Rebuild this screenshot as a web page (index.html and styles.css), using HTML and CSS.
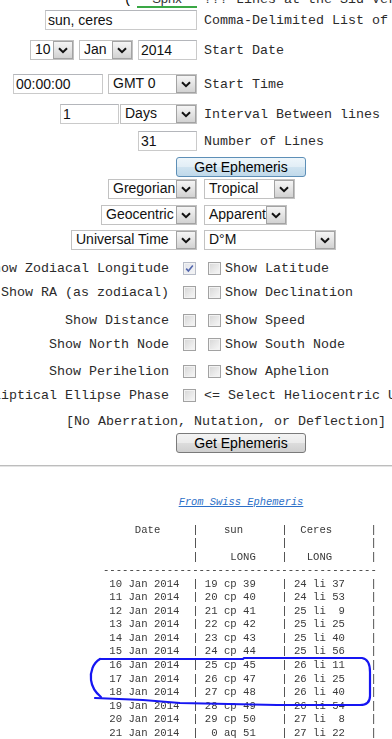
FILE: index.html
```html
<!DOCTYPE html>
<html lang="en">
<head>
    <meta charset="UTF-8">
    <meta name="viewport" content="width=device-width, initial-scale=1.0">
    <title>Ephemeris</title>
    <link rel="stylesheet" href="styles.css">
</head>
<body>
    <div class="page">
        <form class="ephem-form">
            <div class="row row-cut">
                <div class="cell-l"><span class="paren">(</span><span class="sid-link">Sphx</span></div>
                <div class="cell-r label">??? Lines at the Sid Vers</div>
            </div>

            <div class="row mt-1">
                <div class="cell-l"><span class="input in-bodies">sun, ceres</span></div>
                <div class="cell-r label">Comma-Delimited List of</div>
            </div>

            <div class="row mt-10">
                <div class="cell-l">
                    <span class="select sel-day"><span class="val">10</span><span class="arrow"><svg width="10" height="7" viewBox="0 0 10 7"><path d="M1 1.2 L5 5.2 L9 1.2" fill="none" stroke="#111" stroke-width="2"/></svg></span></span>
                    <span class="select sel-month"><span class="val">Jan</span><span class="arrow"><svg width="10" height="7" viewBox="0 0 10 7"><path d="M1 1.2 L5 5.2 L9 1.2" fill="none" stroke="#111" stroke-width="2"/></svg></span></span>
                    <span class="input in-year">2014</span>
                </div>
                <div class="cell-r label">Start Date</div>
            </div>

            <div class="row mt-14">
                <div class="cell-l">
                    <span class="input in-time">00:00:00</span>
                    <span class="select sel-zone"><span class="val">GMT 0</span><span class="arrow"><svg width="10" height="7" viewBox="0 0 10 7"><path d="M1 1.2 L5 5.2 L9 1.2" fill="none" stroke="#111" stroke-width="2"/></svg></span></span>
                </div>
                <div class="cell-r label">Start Time</div>
            </div>

            <div class="row mt-10">
                <div class="cell-l tight">
                    <span class="input in-interval">1</span>
                    <span class="select sel-unit"><span class="val">Days</span><span class="arrow"><svg width="10" height="7" viewBox="0 0 10 7"><path d="M1 1.2 L5 5.2 L9 1.2" fill="none" stroke="#111" stroke-width="2"/></svg></span></span>
                </div>
                <div class="cell-r label">Interval Between lines</div>
            </div>

            <div class="row mt-7">
                <div class="cell-l"><span class="input in-lines">31</span></div>
                <div class="cell-r label">Number of Lines</div>
            </div>

            <button type="button" class="btn btn-focus mt-6">Get Ephemeris</button>

            <div class="row mt-2">
                <div class="cell-l">
                    <span class="select sel-cal"><span class="val">Gregorian</span><span class="arrow"><svg width="10" height="7" viewBox="0 0 10 7"><path d="M1 1.2 L5 5.2 L9 1.2" fill="none" stroke="#111" stroke-width="2"/></svg></span></span>
                </div>
                <div class="cell-r">
                    <span class="select sel-zod"><span class="val">Tropical</span><span class="arrow"><svg width="10" height="7" viewBox="0 0 10 7"><path d="M1 1.2 L5 5.2 L9 1.2" fill="none" stroke="#111" stroke-width="2"/></svg></span></span>
                </div>
            </div>

            <div class="row mt-6">
                <div class="cell-l">
                    <span class="select sel-center"><span class="val">Geocentric</span><span class="arrow"><svg width="10" height="7" viewBox="0 0 10 7"><path d="M1 1.2 L5 5.2 L9 1.2" fill="none" stroke="#111" stroke-width="2"/></svg></span></span>
                </div>
                <div class="cell-r">
                    <span class="select sel-pos"><span class="val">Apparent</span><span class="arrow"><svg width="10" height="7" viewBox="0 0 10 7"><path d="M1 1.2 L5 5.2 L9 1.2" fill="none" stroke="#111" stroke-width="2"/></svg></span></span>
                </div>
            </div>

            <div class="row mt-5">
                <div class="cell-l">
                    <span class="select sel-time"><span class="val">Universal Time</span><span class="arrow"><svg width="10" height="7" viewBox="0 0 10 7"><path d="M1 1.2 L5 5.2 L9 1.2" fill="none" stroke="#111" stroke-width="2"/></svg></span></span>
                </div>
                <div class="cell-r">
                    <span class="select sel-fmt"><span class="val">D°M</span><span class="arrow"><svg width="10" height="7" viewBox="0 0 10 7"><path d="M1 1.2 L5 5.2 L9 1.2" fill="none" stroke="#111" stroke-width="2"/></svg></span></span>
                </div>
            </div>

            <div class="row cb-row mt-8">
                <div class="cell-l"><span class="label">Show Zodiacal Longitude</span><span class="cb checked"><svg width="11" height="11" viewBox="0 0 11 11"><path d="M2.2 5.6 L4.4 8 L8.8 2.6" fill="none" stroke="#5266ad" stroke-width="1.6"/></svg></span></div>
                <div class="cell-r"><span class="cb"></span><span class="label">Show Latitude</span></div>
            </div>

            <div class="row cb-row mt-4">
                <div class="cell-l"><span class="label">Show RA (as zodiacal)</span><span class="cb"></span></div>
                <div class="cell-r"><span class="cb"></span><span class="label">Show Declination</span></div>
            </div>

            <div class="row cb-row mt-8">
                <div class="cell-l"><span class="label">Show Distance</span><span class="cb"></span></div>
                <div class="cell-r"><span class="cb"></span><span class="label">Show Speed</span></div>
            </div>

            <div class="row cb-row mt-4">
                <div class="cell-l"><span class="label">Show North Node</span><span class="cb"></span></div>
                <div class="cell-r"><span class="cb"></span><span class="label">Show South Node</span></div>
            </div>

            <div class="row cb-row mt-7">
                <div class="cell-l"><span class="label">Show Perihelion</span><span class="cb"></span></div>
                <div class="cell-r"><span class="cb"></span><span class="label">Show Aphelion</span></div>
            </div>

            <div class="row cb-row mt-4">
                <div class="cell-l"><span class="label">Show Elliptical Ellipse Phase</span><span class="cb"></span></div>
                <div class="cell-r"><span class="label">&lt;= Select Heliocentric Units</span></div>
            </div>

            <div class="note label mt-7">[No Aberration, Nutation, or Deflection]</div>

            <button type="button" class="btn mt-1">Get Ephemeris</button>
        </form>

        <hr class="divider">

        <div class="ephem-wrap">
            <div class="source"><a href="#">From Swiss Ephemeris</a></div>
<pre class="ephem">
 
     Date     |    sun      |  Ceres      |
              |             |             |
              |     LONG    |   LONG      |
-------------------------------------------
 10 Jan 2014  | 19 cp 39    | 24 li 37    |
 11 Jan 2014  | 20 cp 40    | 24 li 53    |
 12 Jan 2014  | 21 cp 41    | 25 li  9    |
 13 Jan 2014  | 22 cp 42    | 25 li 25    |
 14 Jan 2014  | 23 cp 43    | 25 li 40    |
 15 Jan 2014  | 24 cp 44    | 25 li 56    |
 16 Jan 2014  | 25 cp 45    | 26 li 11    |
 17 Jan 2014  | 26 cp 47    | 26 li 25    |
 18 Jan 2014  | 27 cp 48    | 26 li 40    |
 19 Jan 2014  | 28 cp 49    | 26 li 54    |
 20 Jan 2014  | 29 cp 50    | 27 li  8    |
 21 Jan 2014  |  0 aq 51    | 27 li 22    |
</pre>
            <!-- hand-drawn highlight around 16-18 Jan -->
            <svg class="annot" width="392" height="240" viewBox="0 0 392 240">
                <path d="M100 163 C93 167 90 176 91 184 C92 192 96 197 101 201" fill="none" stroke="#1616f2" stroke-width="2.2" stroke-linecap="round"/>
                <path d="M100 163 L243 163 L244 162 L362 162 C368 163 370 168 370 176 L370 200 C370 206 367 209 360 209 L277 209 L180 207 L143 204 L95 202" fill="none" stroke="#1616f2" stroke-width="2.2" stroke-linecap="round" stroke-linejoin="round"/>
            </svg>
        </div>
    </div>
</body>
</html>
```

FILE: styles.css
```css
body {
    margin: 0;
    background-color: #fff;
    overflow: hidden;
    font-family: "Liberation Sans", Arial, sans-serif;
}

.page {
    width: 482px;
}

.ephem-form {
    margin: 0;
}

/* two column form rows, left side right-aligned */
.row {
    display: grid;
    grid-template-columns: 197px max-content;
    column-gap: 7px;
    height: 20px;
    align-items: center;
}

.row-cut {
    margin-top: -11px;
}

.cell-l {
    display: flex;
    justify-content: flex-end;
    align-items: center;
    gap: 5px;
    height: 20px;
}

.cell-l.tight {
    gap: 1px;
}

.cell-r {
    display: flex;
    align-items: center;
    gap: 5px;
    height: 20px;
}

.label {
    font-family: "Liberation Mono", "Courier New", monospace;
    font-size: 13.33px;
    color: #2b2b2b;
    white-space: pre;
}

.mt-1 { margin-top: 1px; }
.mt-2 { margin-top: 2px; }
.mt-4 { margin-top: 4px; }
.mt-5 { margin-top: 5px; }
.mt-6 { margin-top: 6px; }
.mt-7 { margin-top: 7px; }
.mt-8 { margin-top: 8px; }
.mt-10 { margin-top: 10px; }
.mt-14 { margin-top: 14px; }

.paren {
    font-family: "Liberation Mono", monospace;
    font-size: 13.33px;
}

.sid-link {
    display: inline-block;
    width: 60px;
    border-bottom: 2px solid #3aa845;
    font-size: 13px;
    color: #333;
    text-align: center;
}

/* inputs */
.input {
    box-sizing: border-box;
    flex-shrink: 0;
    height: 20px;
    padding: 0 2px;
    border: 1px solid #cacaca;
    border-top-color: #b4b6bb;
    background-color: #fff;
    font-size: 14px;
    line-height: 18px;
    color: #111;
    white-space: nowrap;
}

.in-bodies { width: 152px; }
.in-year { width: 59px; }
.in-time { width: 90px; }
.in-interval { width: 59px; }
.in-lines { width: 59px; }

/* selects */
.select {
    box-sizing: border-box;
    flex-shrink: 0;
    display: flex;
    height: 20px;
    border: 1px solid #c2c2c2;
    background-color: #fff;
    font-size: 14px;
    line-height: 17px;
    color: #111;
    white-space: nowrap;
}

.select .val {
    flex: 1;
    padding-left: 4px;
    overflow: hidden;
}

.select .arrow {
    box-sizing: border-box;
    width: 20px;
    display: flex;
    align-items: center;
    justify-content: center;
    border: 1px solid #a3a3a3;
    background: linear-gradient(#f5f5f5, #e4e4e4 50%, #d2d2d2);
}

.sel-day { width: 44px; }
.sel-month { width: 54px; }
.sel-zone { width: 89px; }
.sel-unit { width: 77px; }
.sel-cal { width: 89px; }
.sel-zod { width: 91px; }
.sel-center { width: 96px; }
.sel-pos { width: 83px; }
.sel-time { width: 126px; }
.sel-fmt { width: 132px; }

/* checkboxes */
.cb-row .cell-l {
    gap: 14px;
    padding-right: 1px;
}

.cb-row .cell-r {
    gap: 4px;
}

.cb-row .cell-r .cb {
    margin-left: 4px;
}

.cb {
    box-sizing: border-box;
    flex-shrink: 0;
    width: 13px;
    height: 13px;
    border: 1px solid #a2a2a2;
    background: linear-gradient(135deg, #d6d6d6, #eeeeee 70%, #f7f7f7);
    box-shadow: inset 0 0 0 1px #f2f2f2;
    display: flex;
    align-items: center;
    justify-content: center;
}

.cb.checked {
    border-color: #b7bcc8;
    background: linear-gradient(135deg, #e2e4ea, #f4f5f8);
}

.note {
    height: 20px;
    line-height: 20px;
    padding-left: 66px;
}

/* buttons */
.btn {
    display: block;
    box-sizing: border-box;
    width: 130px;
    height: 20px;
    margin-left: auto;
    margin-right: auto;
    padding: 0;
    border: 1px solid #7a7a7a;
    border-radius: 3px;
    background: linear-gradient(#f3f3f3, #ebebeb 48%, #dcdcdc 52%, #cfcfcf);
    font-family: "Liberation Sans", Arial, sans-serif;
    font-size: 14px;
    line-height: 17px;
    color: #000;
}

.btn-focus {
    border-color: #5d8fb7;
    background: linear-gradient(#eef6fb, #e2eef6 48%, #cfe3f0 52%, #c0d9ea);
}

.divider {
    height: 0;
    margin: 12px 0 0;
    border: 0;
    border-top: 1px solid #bdbdbd;
    border-bottom: 1px solid #e4e4e4;
}

/* ephemeris output */
.ephem-wrap {
    position: relative;
    margin-top: 29px;
}

.source {
    text-align: center;
    font-family: "Liberation Mono", monospace;
    font-size: 10.4px;
    line-height: 13.55px;
    font-style: italic;
}

.source a {
    color: #2b6fc8;
}

.ephem {
    margin: 0 0 0 103px;
    font-family: "Liberation Mono", monospace;
    font-size: 10.62px;
    line-height: 13.55px;
    color: #3a3a3a;
    will-change: transform;
}

.annot {
    position: absolute;
    left: 0;
    top: 0;
    pointer-events: none;
}
```
